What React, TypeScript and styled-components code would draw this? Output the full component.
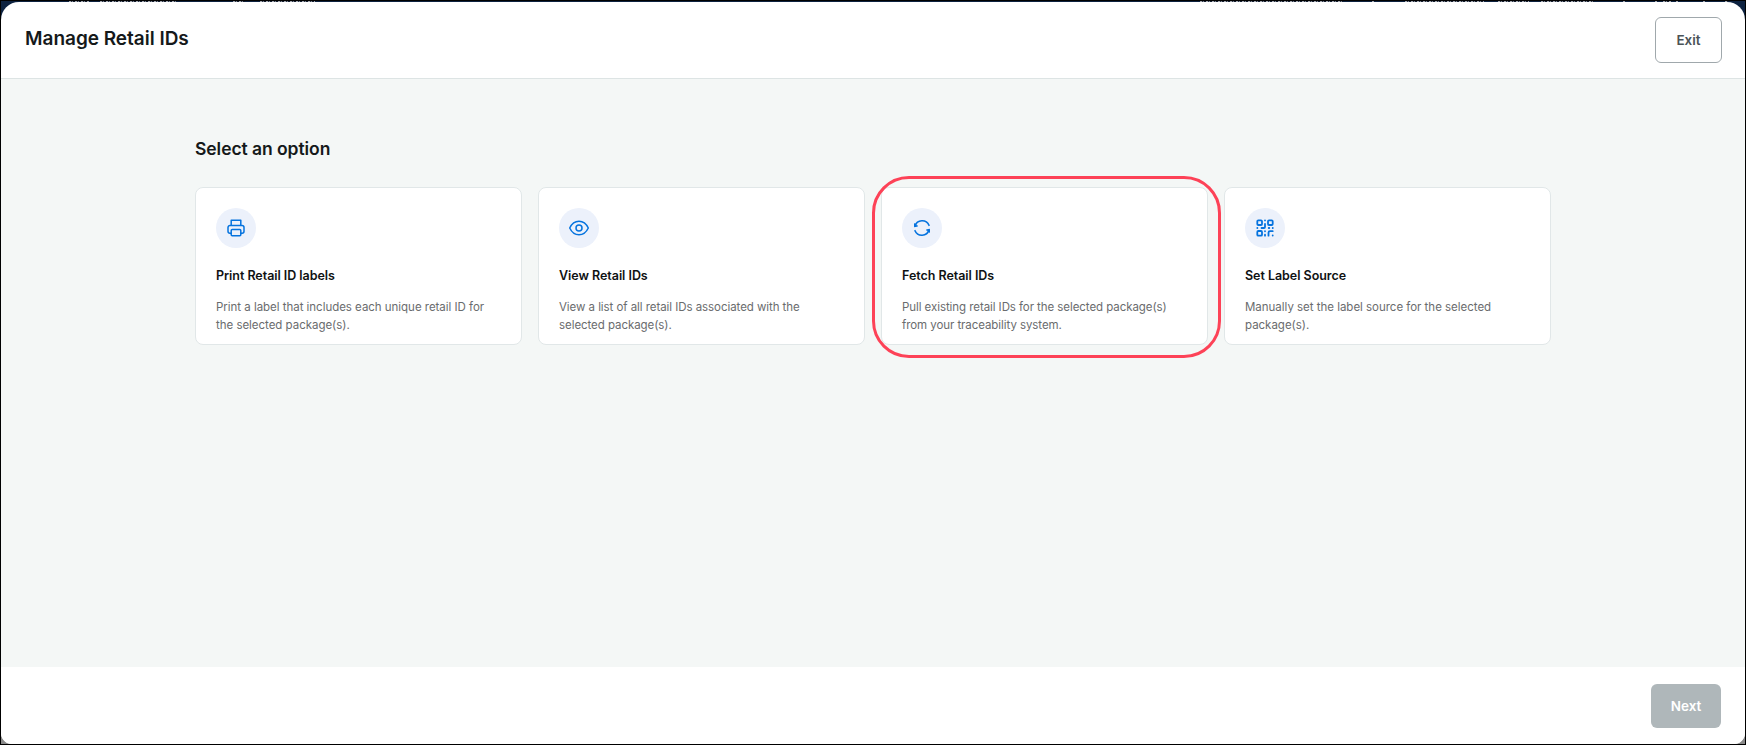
import React from 'react';
import styled, { createGlobalStyle } from 'styled-components';

const GlobalStyle = createGlobalStyle`
  *, *::before, *::after { box-sizing: border-box; }
  body { margin: 0; background: #000; font-family: Inter, 'Liberation Sans', sans-serif; }
  h1, h2, h3, p { margin: 0; }
`;

const Screen = styled.div`
  height: 745px;
  padding: 1px;
  background: #000;
`;

const Backdrop = styled.div`
  display: flex;
  flex-direction: column;
  height: 743px;
  background: linear-gradient(#0d2240 0 50%, #8a8a8a 50%);
`;

/* Sliver of the page's navigation that shows above the dialog */
const NavSliver = styled.div`
  display: flex;
  height: 1px;
`;

const NavMark = styled.span<{ $gap: number; $width: number }>`
  flex: none;
  width: ${p => p.$width}px;
  height: 1px;
  margin-left: ${p => p.$gap}px;
  background: repeating-linear-gradient(90deg, #a4a8af 0 2px, #2a3344 2px 3px, #7f8590 3px 4px, #141d2e 4px 6px);
`;

const Dialog = styled.div`
  flex: 1;
  display: flex;
  flex-direction: column;
  overflow: hidden;
  border-radius: 18px 18px 11px 11px;
  background: #fff;
`;

const Header = styled.header`
  display: flex;
  justify-content: space-between;
  align-items: flex-start;
  height: 77px;
  padding: 15px 23px 0 24px;
  border-bottom: 1px solid #dde4e4;
`;

const Title = styled.h1`
  padding-top: 10px;
  font-size: 19px;
  line-height: 24px;
  font-weight: 600;
  letter-spacing: -0.02px;
  color: #15191a;
`;

const Button = styled.button<{ $solid?: boolean }>`
  width: ${p => (p.$solid ? 70 : 67)}px;
  height: ${p => (p.$solid ? 44 : 46)}px;
  padding: 0;
  border: ${p => (p.$solid ? '0' : '1px solid #a0a8ac')};
  border-radius: 6px;
  background: ${p => (p.$solid ? '#afb7ba' : '#fff')};
  color: ${p => (p.$solid ? '#fff' : '#4b5357')};
  font: 600 13.5px Inter, sans-serif;
`;

const Main = styled.main`
  flex: 1;
  padding: 58px 194px 0;
  background: #f4f7f6;
`;

const SectionTitle = styled.h2`
  margin-bottom: 26px;
  font-size: 17.5px;
  line-height: 24px;
  font-weight: 600;
  letter-spacing: -0.06px;
  color: #15191a;
`;

const Cards = styled.div`
  display: grid;
  grid-template-columns: repeat(4, 1fr);
  gap: 16px;
`;

const Card = styled.section`
  position: relative;
  height: 158px;
  padding: 20px;
  border: 1px solid #e1e7e8;
  border-radius: 8px;
  background: #fff;
`;

const Highlight = styled.div`
  position: absolute;
  inset: -12px -14px -14px -10px;
  border: 3px solid #fd4257;
  border-radius: 37px;
  pointer-events: none;
`;

const IconDisc = styled.div`
  display: flex;
  align-items: center;
  justify-content: center;
  width: 40px;
  height: 40px;
  border-radius: 50%;
  background: #ecf1fb;
`;

const CardTitle = styled.h3`
  margin-top: 18px;
  font-size: 12.5px;
  line-height: 20px;
  font-weight: 600;
  letter-spacing: -0.04px;
  color: #0f1213;
  white-space: nowrap;
`;

const Description = styled.p<{ $tracking: number }>`
  margin-top: 12px;
  font-size: 11.5px;
  line-height: 18px;
  letter-spacing: ${p => p.$tracking}px;
  color: #6a6c6e;
  white-space: nowrap;
`;

const Footer = styled.footer`
  display: flex;
  justify-content: flex-end;
  height: 77px;
  padding: 17px 24px 0 0;
  background: #fff;
`;

const Glyph = styled.svg<{ $weight?: number }>`
  width: 24px;
  height: 24px;
  fill: none;
  stroke: #0573de;
  stroke-width: ${p => p.$weight ?? 1.5};
  stroke-linecap: round;
  stroke-linejoin: round;
`;

const PrinterIcon = () => (
  <Glyph viewBox="0 0 24 24">
    <path d="M7.2 9.5V4.3h9.6v5.2M7 17.2H6a2 2 0 0 1-2-2v-3.7a2 2 0 0 1 2-2h12a2 2 0 0 1 2 2v3.7a2 2 0 0 1-2 2h-1" />
    <rect x="7.2" y="13.5" width="9.6" height="6.2" rx="1" />
  </Glyph>
);

const EyeIcon = () => (
  <Glyph viewBox="0 0 24 24">
    <path d="M2.7 12C4.6 8 8 5.2 12 5.2s7.4 2.8 9.3 6.8c-1.9 4-5.3 6.8-9.3 6.8S4.6 16 2.7 12Z" />
    <circle cx="12" cy="12" r="3" />
  </Glyph>
);

const SyncIcon = () => (
  <Glyph viewBox="0 0 24 24" $weight={1.6}>
    <path d="M19 9.3A7.5 7.5 0 0 0 5 10M5 14.7A7.5 7.5 0 0 0 19 14" />
    <path fill="#0573de" strokeWidth="1" d="M4.5 8v2.800l2.700-.7ZM19.500 16v-2.800l-2.700.7Z" />
  </Glyph>
);

const QrIcon = () => (
  <Glyph viewBox="0 0 24 24" $weight={1.8}>
    <rect x="4.3" y="4.3" width="4.7" height="4.7" rx="1" />
    <rect x="15" y="4.3" width="4.7" height="4.7" rx="1" />
    <rect x="4.3" y="15" width="4.7" height="4.7" rx="1" />
    <path d="M12 4.3v.1M12 8v3a1 1 0 0 1-1 1H8.5M4.3 12h.1M15.7 12h.6M19.7 12h.1M12 15.2v.1M12 18.7v1M15.5 19.7v-3a1.5 1.5 0 0 1 1.5-1.5h2.7M19.7 19.5v.1" />
  </Glyph>
);

const navMarks = [
  [68, 20], [11, 76], [57, 12], [15, 55], [885, 143], [29, 2], [31, 79],
  [14, 31], [12, 53], [29, 2], [30, 2], [6, 8], [5, 2], [25, 2], [20, 3],
];

const options = [
  { title: 'Print Retail ID labels', lines: ['Print a label that includes each unique retail ID for', 'the selected package(s).'], tracking: -0.03, Icon: PrinterIcon },
  { title: 'View Retail IDs', lines: ['View a list of all retail IDs associated with the', 'selected package(s).'], tracking: -0.06, Icon: EyeIcon },
  { title: 'Fetch Retail IDs', lines: ['Pull existing retail IDs for the selected package(s)', 'from your traceability system.'], tracking: -0.07, Icon: SyncIcon, highlighted: true },
  { title: 'Set Label Source', lines: ['Manually set the label source for the selected', 'package(s).'], tracking: -0.02, Icon: QrIcon },
];

export default function App() {
  return (
    <Screen>
      <GlobalStyle />
      <Backdrop>
        <NavSliver>
          {navMarks.map(([gap, width], i) => <NavMark key={i} $gap={gap} $width={width} />)}
        </NavSliver>
        <Dialog>
          <Header>
            <Title>Manage Retail IDs</Title>
            <Button>Exit</Button>
          </Header>
          <Main>
            <SectionTitle>Select an option</SectionTitle>
            <Cards>
              {options.map(({ title, lines, tracking, Icon, highlighted }) => (
                <Card key={title}>
                  <IconDisc><Icon /></IconDisc>
                  <CardTitle>{title}</CardTitle>
                  <Description $tracking={tracking}>{lines[0]}<br />{lines[1]}</Description>
                  {highlighted && <Highlight />}
                </Card>
              ))}
            </Cards>
          </Main>
          <Footer><Button $solid>Next</Button></Footer>
        </Dialog>
      </Backdrop>
    </Screen>
  );
}
